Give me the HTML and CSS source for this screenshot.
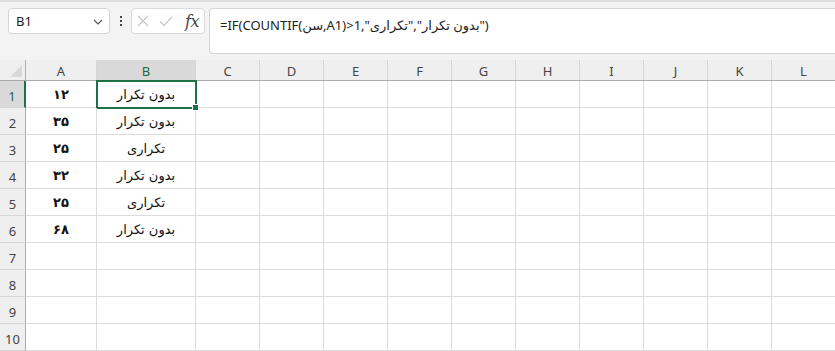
FILE: index.html
```html
<!DOCTYPE html>
<html>
<head>
<meta charset="utf-8">
<link rel="stylesheet" href="styles.css">
</head>
<body>
<div class="toolbar">
  <div class="namebox">
    <span class="ref">B1</span>
    <svg class="chev" width="10" height="6" viewBox="0 0 10 6"><path d="M1 1 L5 5 L9 1" fill="none" stroke="#555" stroke-width="1.1"/></svg>
  </div>
  <div class="dots"><i></i><i></i><i></i></div>
  <div class="fxbox">
    <svg width="12" height="12" viewBox="0 0 12 12"><path d="M1 1 L11 11 M11 1 L1 11" stroke="#c4c4c4" stroke-width="1.1" fill="none"/></svg>
    <svg width="14" height="11" viewBox="0 0 14 11"><path d="M1 5.5 L5 9.5 L13 1" stroke="#c4c4c4" stroke-width="1.1" fill="none"/></svg>
    <span class="fx">fx</span>
  </div>
  <div class="formula"><span class="ftext">=IF(COUNTIF(<bdi>سن</bdi>,A1)&gt;1,"<bdi>تکراری</bdi>","<bdi>بدون تکرار</bdi>")</span></div>
</div>
<div class="sheet">
  <div class="row head">
    <div class="corner"><svg width="12" height="12" viewBox="0 0 12 12"><path d="M12 0 L12 12 L0 12 Z" fill="#d8d8d8"/></svg></div>
    <div class="ch">A</div><div class="ch sel">B</div><div class="ch">C</div><div class="ch">D</div><div class="ch">E</div><div class="ch">F</div><div class="ch">G</div><div class="ch">H</div><div class="ch">I</div><div class="ch">J</div><div class="ch">K</div><div class="ch">L</div>
  </div>
  <div class="row">
    <div class="rh sel">1</div><div class="c num">۱۲</div><div class="c txt active">بدون تکرار<span class="handle"></span></div><div class="c"></div><div class="c"></div><div class="c"></div><div class="c"></div><div class="c"></div><div class="c"></div><div class="c"></div><div class="c"></div><div class="c"></div><div class="c"></div>
  </div>
  <div class="row">
    <div class="rh">2</div><div class="c num">۳۵</div><div class="c txt">بدون تکرار</div><div class="c"></div><div class="c"></div><div class="c"></div><div class="c"></div><div class="c"></div><div class="c"></div><div class="c"></div><div class="c"></div><div class="c"></div><div class="c"></div>
  </div>
  <div class="row">
    <div class="rh">3</div><div class="c num">۲۵</div><div class="c txt">تکراری</div><div class="c"></div><div class="c"></div><div class="c"></div><div class="c"></div><div class="c"></div><div class="c"></div><div class="c"></div><div class="c"></div><div class="c"></div><div class="c"></div>
  </div>
  <div class="row">
    <div class="rh">4</div><div class="c num">۳۲</div><div class="c txt">بدون تکرار</div><div class="c"></div><div class="c"></div><div class="c"></div><div class="c"></div><div class="c"></div><div class="c"></div><div class="c"></div><div class="c"></div><div class="c"></div><div class="c"></div>
  </div>
  <div class="row">
    <div class="rh">5</div><div class="c num">۲۵</div><div class="c txt">تکراری</div><div class="c"></div><div class="c"></div><div class="c"></div><div class="c"></div><div class="c"></div><div class="c"></div><div class="c"></div><div class="c"></div><div class="c"></div><div class="c"></div>
  </div>
  <div class="row">
    <div class="rh">6</div><div class="c num">۶۸</div><div class="c txt">بدون تکرار</div><div class="c"></div><div class="c"></div><div class="c"></div><div class="c"></div><div class="c"></div><div class="c"></div><div class="c"></div><div class="c"></div><div class="c"></div><div class="c"></div>
  </div>
  <div class="row">
    <div class="rh">7</div><div class="c"></div><div class="c"></div><div class="c"></div><div class="c"></div><div class="c"></div><div class="c"></div><div class="c"></div><div class="c"></div><div class="c"></div><div class="c"></div><div class="c"></div><div class="c"></div>
  </div>
  <div class="row">
    <div class="rh">8</div><div class="c"></div><div class="c"></div><div class="c"></div><div class="c"></div><div class="c"></div><div class="c"></div><div class="c"></div><div class="c"></div><div class="c"></div><div class="c"></div><div class="c"></div><div class="c"></div>
  </div>
  <div class="row">
    <div class="rh">9</div><div class="c"></div><div class="c"></div><div class="c"></div><div class="c"></div><div class="c"></div><div class="c"></div><div class="c"></div><div class="c"></div><div class="c"></div><div class="c"></div><div class="c"></div><div class="c"></div>
  </div>
  <div class="row">
    <div class="rh">10</div><div class="c"></div><div class="c"></div><div class="c"></div><div class="c"></div><div class="c"></div><div class="c"></div><div class="c"></div><div class="c"></div><div class="c"></div><div class="c"></div><div class="c"></div><div class="c"></div>
  </div>
</div>
</body>
</html>
```
FILE: styles.css
```css
* { box-sizing: border-box; }
html, body { margin: 0; padding: 0; width: 835px; height: 351px; overflow: hidden; background: #fff; }
body { font-family: "Noto Sans", "DejaVu Sans", sans-serif; }

.toolbar {
  height: 60px;
  background: #f3f3f3;
  border-top: 2px solid #dedede;
  display: flex;
  align-items: flex-start;
  padding: 6px 0 0 8px;
}
.namebox {
  width: 102px; height: 26px;
  background: #fff;
  border: 1px solid #d4d4d4;
  border-radius: 4px;
  display: flex; align-items: center; justify-content: space-between;
  padding: 0 6px 0 7px;
}
.ref { font-size: 13px; color: #222; }
.chev { margin-top: 1px; }
.dots { width: 21px; height: 26px; display: flex; flex-direction: column; align-items: center; justify-content: center; gap: 2px; }
.dots i { display: block; width: 2px; height: 2px; background: #444; }
.fxbox {
  width: 74px; height: 26px;
  background: #fff;
  border: 1px solid #dadada;
  border-radius: 4px;
  display: flex; align-items: center;
  padding: 0 0 0 5px; gap: 10px;
}
.fx { font-family: "DejaVu Serif", "Liberation Serif", serif; font-style: italic; font-size: 16px; color: #444; margin-left: 2px; letter-spacing: -0.5px; }
.formula {
  margin-left: 4px;
  flex: 1;
  height: 46px;
  background: #fff;
  border: 1px solid #d4d4d4;
  border-right: none;
  border-radius: 4px 0 0 4px;
  padding: 4px 0 0 10px;
}
.ftext { font-size: 13px; color: #222; }

.sheet { display: flex; flex-direction: column; }
.row {
  display: grid;
  grid-template-columns: 26px 71px 99px repeat(10, 64px);
  height: 27px;
}
.row.head { height: 21px; background: #efefef; border-bottom: 1px solid #ababab; }
.corner { border-right: 1px solid #ababab; display: flex; align-items: flex-end; justify-content: flex-end; padding: 0 3px 3px 0; }
.ch {
  border-right: 1px solid #d6d6d6;
  display: flex; align-items: center; justify-content: center;
  font-size: 13px; color: #444;
  padding-top: 1px;
}
.ch.sel { background: #d9d9d9; color: #1e6b42; }
.rh {
  background: #efefef;
  border-right: 1px solid #ababab;
  border-bottom: 1px solid #d6d6d6;
  display: flex; align-items: flex-end; justify-content: center;
  padding-bottom: 2px;
  font-size: 13px; color: #444;
}
.rh.sel { background: #d9d9d9; color: #1e6b42; border-right: 2px solid #1e7145; }
.c {
  border-right: 1px solid #dcdcdc;
  border-bottom: 1px solid #dcdcdc;
  display: flex; align-items: center; justify-content: center;
  font-family: "DejaVu Sans", sans-serif;
  font-size: 13px; color: #111;
  position: relative;
}
.c.num { font-weight: bold; }
.c.txt { font-size: 13px; }
.active { outline: 2px solid #1e7145; outline-offset: -1px; }
.handle {
  position: absolute; right: -4px; bottom: -4px;
  width: 7px; height: 7px;
  background: #1e7145;
  border: 1px solid #fff;
  z-index: 2;
}
```
